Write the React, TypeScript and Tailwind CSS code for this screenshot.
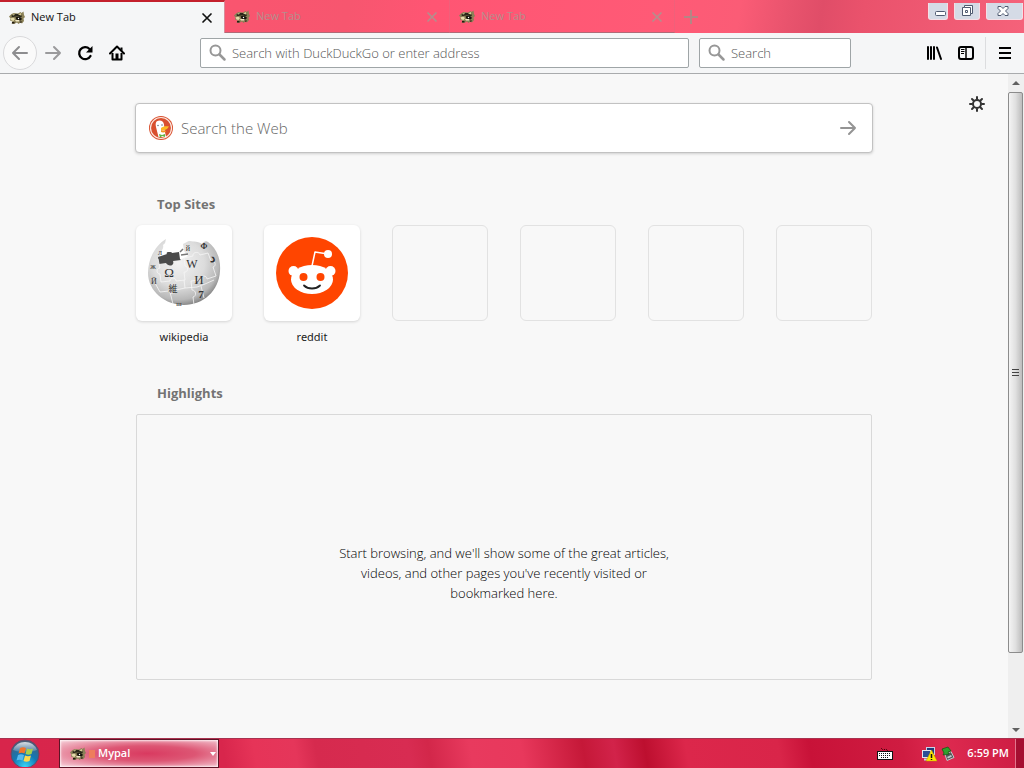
import type { ReactNode } from "react";

const TOP_SITES = [
  { id: "wikipedia", label: "wikipedia", href: "#wikipedia" },
  { id: "reddit", label: "reddit", href: "#reddit" },
];

const EMPTY_TILES = ["t3", "t4", "t5", "t6"];

const TABS = [
  { id: "tab-1", title: "New Tab", active: true },
  { id: "tab-2", title: "New Tab", active: false },
  { id: "tab-3", title: "New Tab", active: false },
];

/* ---------- icons ---------- */

const RaccoonIcon = () => (
  <svg width="16" height="16" viewBox="0 0 16 16" aria-hidden="true" className="shrink-0">
    <path d="M0 6.500 2.500 4 5 3l4 .5L11.500 2l1 1L14.500 1.500 15 5l1 2-1.500 1.500L15 11l-2 2.500-1.500-1L9.500 14 8 12.500 5 14l-2.500-.5 1-2L1 10.500l.5-2z" fill="#8b8157" />
    <path d="M2.500 5.500C5 3.500 10 3.500 13 6l-1 1.500C9 6 6 6 3 7.500z" fill="#2a281a" />
    <path d="M3 5 6 3.500l-1 2zM9 4.500l3-1.500v2.500z" fill="#d9cf98" />
    <path d="M1.500 8.500 4 7.500 6 9 4.500 11l-2-.5z" fill="#e6dcab" />
    <path d="M6.500 7.500c2.500-1 5-.5 6.500 1.500l-1.500 1.500H8z" fill="#16130c" />
    <path d="M6 10h4l1 1.500H7z" fill="#f0e7c4" />
    <path d="M3 12h2.500v1.500H3zM10 11.500h3l-1 1.500z" fill="#231b10" />
    <circle cx="9.500" cy="8.500" r=".7" fill="#fff" />
  </svg>
);

const CloseIcon = () => (
  <svg width="12" height="12" viewBox="0 0 12 12" fill="none" stroke="currentColor" strokeWidth="1.700" strokeLinecap="round" aria-hidden="true">
    <path d="M2 2l8 8M10 2l-8 8" />
  </svg>
);

const ArrowIcon = ({ back = false }: { back?: boolean }) => (
  <svg width="18" height="18" viewBox="0 0 18 18" fill="none" stroke="currentColor" strokeWidth="2" strokeLinecap="round" strokeLinejoin="round" aria-hidden="true" className={back ? "rotate-180" : ""}>
    <path d="M2 9h14M10 3l6 6-6 6" />
  </svg>
);

const SearchIcon = () => (
  <svg width="18" height="18" viewBox="0 0 18 18" fill="none" stroke="#979797" strokeWidth="2" strokeLinecap="round" aria-hidden="true" className="shrink-0">
    <circle cx="6.500" cy="6.500" r="5" />
    <path d="M10.500 10.500l5 5" strokeWidth="2.500" />
  </svg>
);

const ReloadIcon = () => (
  <svg width="16" height="16" viewBox="0 0 16 16" aria-hidden="true">
    <path d="M12.500 4A6 6 0 1 0 13.500 11" fill="none" stroke="#000" strokeWidth="2.300" strokeLinecap="round" />
    <path d="M15.500 1v6.500H9z" fill="#000" />
  </svg>
);

const HomeIcon = () => (
  <svg width="16" height="16" viewBox="0 0 16 16" aria-hidden="true">
    <path d="M1 8.500 8 1.500l7 7" fill="none" stroke="#000" strokeWidth="2" strokeLinecap="round" strokeLinejoin="round" />
    <path d="M3.500 8v6.500h9V8" fill="none" stroke="#000" strokeWidth="2" strokeLinejoin="round" />
    <path d="M6.500 8.500h3V14h-3z" fill="#000" />
    <path d="M11.500 2.500h2V6l-2-2z" fill="#000" />
  </svg>
);

const LibraryIcon = () => (
  <svg width="16" height="16" viewBox="0 0 16 16" stroke="#000" strokeWidth="2" strokeLinecap="round" aria-hidden="true">
    <path d="M2 2v12M5 2v12M8 2v12M11 2.500l4 11.500" />
  </svg>
);

const SidebarIcon = () => (
  <svg width="16" height="16" viewBox="0 0 16 16" fill="none" stroke="#000" aria-hidden="true">
    <rect x="1" y="2" width="14" height="12" rx="2" strokeWidth="2" />
    <path d="M8 2v12" strokeWidth="1.500" />
    <path d="M3 4.500h3.500M3 6.500h3.500M3 8.500h3" />
  </svg>
);

const GearIcon = () => (
  <svg width="16" height="16" viewBox="0 0 16 16" fill="none" stroke="#333" strokeLinecap="round" aria-hidden="true">
    <circle cx="8" cy="8" r="4" strokeWidth="2" />
    <path d="M8 1v2M8 13v2M1 8h2M13 8h2M3 3l1.500 1.500M11.500 11.500 13 13M3 13l1.500-1.500M11.500 4.500 13 3" strokeWidth="2" />
  </svg>
);

const DuckIcon = () => (
  <svg width="24" height="24" viewBox="0 0 24 24" aria-hidden="true" className="shrink-0">
    <circle cx="12" cy="12" r="12" fill="#d9502f" />
    <circle cx="12" cy="12" r="10.500" fill="none" stroke="#fbe9e2" strokeWidth="1.200" />
    <path d="M7.500 5.500c3-2 7-1 7.500 3l.5 5L17 21H9.500L7 11C6.500 8.500 6.500 7 7.500 5.500z" fill="#fff" />
    <path d="M12 12c2-2 5-2 8-1.500l-2 2.500c-2 1-4 2-6 1z" fill="#fdb924" />
    <path d="M12 14c2 1 4 0 5 1s-3 2-5 1z" fill="#f29220" />
    <circle cx="9" cy="9.500" r=".8" fill="#6b7b88" />
    <circle cx="13" cy="9" r=".8" fill="#6b7b88" />
    <path d="M10 18l3 1 3-1v3l-3-1-2 2z" fill="#62b445" />
  </svg>
);

const WikipediaLogo = () => (
  <svg width="76" height="76" viewBox="0 0 76 76" aria-hidden="true">
    <defs>
      <radialGradient id="globe" cx="42%" cy="36%" r="66%">
        <stop offset="0" stopColor="#f2f2f2" />
        <stop offset=".55" stopColor="#dcdcdc" />
        <stop offset=".85" stopColor="#b8b8b8" />
        <stop offset="1" stopColor="#838383" />
      </radialGradient>
    </defs>
    <path d="M20 4c-1 3 0 4-3 6 1 3-1 5-3 9l0 6h20l8-4-4-5-1-7c3-1 4-3 7-3 4 1 8 0 12 3 1-2 4-4 6-2 8 6 13 16 12 29-1 20-17 34-36 34S2 56 2 38C2 23 10 10 20 4z" fill="url(#globe)" />
    <path d="M12 22l9-3c-1-1 0-2 2-2s3 0 3 1l7-1 1 7 1 1-8 1c2 5-5 6-7 2l-7 1z" fill="#4b4b4b" />
    <path d="M34 17l3-3M35 20l7-1" fill="none" stroke="#777" strokeWidth="1.500" />
    <path d="M12 24l2 9c-4 0-4 6 0 6l1 8 9-1c0-4 6-4 6 0l9-1-1-8c4 1 5-6 1-6l-1-8 9-2c-1-4 6-5 7-1l8-2 3 8c4-1 6 5 2 6l3 9-9 3c0-4-7-4-6 1l-10 1 1 9c4 0 5 6 1 7l1 8M38 45l1 8-9 2c0 4-6 5-7 1l-9 1-5-9M24 57l3 12M39 53l12-1 8-3 9-4M55 51l3 12" fill="none" stroke="#f6f6f6" strokeWidth=".8" />
    <g fill="#333" fontFamily="Liberation Serif, serif" textAnchor="middle">
      <text x="23" y="42" fontSize="13">Ω</text>
      <text x="46" y="33" fontSize="12">W</text>
      <text x="53" y="49" fontSize="13">И</text>
      <text x="55" y="63" fontSize="11" fontWeight="bold">7</text>
      <text x="27" y="57" fontSize="9" fontFamily="Noto Sans CJK JP, sans-serif">維</text>
      <text x="66" y="27" fontSize="12" fontWeight="bold">د</text>
      <text x="42" y="16" fontSize="8">й</text>
      <text x="58" y="14" fontSize="8" fontWeight="bold">Ф</text>
      <text x="7" y="34" fontSize="8">ж</text>
      <text x="8" y="49" fontSize="8">Й</text>
      <text x="33" y="71" fontSize="7">ш</text>
      <text x="14" y="20" fontSize="8">л</text>
    </g>
  </svg>
);

const RedditLogo = () => (
  <svg width="72" height="72" viewBox="0 0 72 72" aria-hidden="true">
    <circle cx="36" cy="36" r="36" fill="#ff4500" />
    <path d="M36 29l3-14 13 2" fill="none" stroke="#fff" strokeWidth="1.500" strokeLinejoin="round" />
    <circle cx="52" cy="17" r="4" fill="#fff" />
    <circle cx="17.500" cy="34" r="5" fill="#fff" />
    <circle cx="54.500" cy="34" r="5" fill="#fff" />
    <ellipse cx="36" cy="42.500" rx="21" ry="14.500" fill="#fff" />
    <circle cx="27.500" cy="40" r="4" fill="#ff4500" />
    <circle cx="44.500" cy="40" r="4" fill="#ff4500" />
    <path d="M28 48.500c4 4 12 4 16 0" fill="none" stroke="#222" strokeWidth="1.800" strokeLinecap="round" />
  </svg>
);

const StartOrb = () => (
  <svg width="30" height="28" viewBox="0 0 30 28" aria-hidden="true">
    <defs>
      <radialGradient id="orb" cx="50%" cy="95%" r="90%">
        <stop offset="0" stopColor="#36d6f5" />
        <stop offset=".5" stopColor="#1378b4" />
        <stop offset="1" stopColor="#4a5d78" />
      </radialGradient>
      <linearGradient id="gloss" x1="0" y1="0" x2="0" y2="1">
        <stop offset="0" stopColor="#fff" stopOpacity=".8" />
        <stop offset="1" stopColor="#fff" stopOpacity=".1" />
      </linearGradient>
    </defs>
    <circle cx="15" cy="15" r="14" fill="url(#orb)" stroke="#6c4763" />
    <path d="M3 11a13 13 0 0 1 24 0c-8 3-16 3-24 0z" fill="url(#gloss)" />
    <path d="M10 9c2-1 4-1 6 0l-1.500 5.500c-2-1-4-1-6 0z" fill="#f0742c" />
    <path d="M17 9.500c2 1 4 1 6 0l-1.500 5.500c-2 1-4 1-6 0z" fill="#a9d04b" />
    <path d="M8 16c2-1 4-1 6 0l-1.500 5.500c-2-1-4-1-6 0z" fill="#59b9ee" />
    <path d="M15 16.500c2 1 4 1 6 0l-1.500 5.500c-2 1-4 1-6 0z" fill="#fdd84c" />
  </svg>
);

const KeyboardIcon = () => (
  <svg width="16" height="14" viewBox="0 0 16 14" aria-hidden="true">
    <path d="M4 1l2 2 3-1 2 2" fill="none" stroke="#300" strokeDasharray="1 1" />
    <rect x=".5" y="4.500" width="15" height="8" fill="#fff" stroke="#111" />
    <path d="M2 6.500h12M2 8.500h12M4 10.500h8" stroke="#111" strokeDasharray="1 1" />
  </svg>
);

const NetworkIcon = () => (
  <svg width="16" height="16" viewBox="0 0 16 16" aria-hidden="true">
    <rect x="5.500" y="1.500" width="8" height="7" fill="#203a78" stroke="#c9d2e4" />
    <rect x="1.500" y="4.500" width="8" height="7" fill="#2d4f96" stroke="#e1e6f0" />
    <path d="M3 13.500h5" stroke="#c9d2e4" strokeWidth="2" />
    <path d="M10.500 4 16 15H5z" fill="#ffe600" stroke="#b99b00" strokeWidth=".5" />
    <path d="M10.500 8v4M10.500 13v1" stroke="#111" strokeWidth="1.500" />
  </svg>
);

const DeviceIcon = () => (
  <svg width="14" height="16" viewBox="0 0 14 16" aria-hidden="true">
    <path d="M4 8.500l6-3 3 6-7 3z" fill="#53585a" stroke="#c3c8c8" />
    <path d="M6 11l4-2 1 1.500-4 2z" fill="#c3cccc" />
    <path d="M1 3l6-2 3 4-3 1 1 2-6 1 1-2z" fill="#2fa22d" stroke="#12560f" strokeWidth=".7" />
  </svg>
);

/* ---------- window chrome ---------- */

const CaptionButton = ({ label, className, children }: { label: string; className: string; children: ReactNode }) => (
  <button
    type="button"
    aria-label={label}
    className={`flex h-[17px] items-center justify-center rounded-b-[3px] border border-t-0 border-[#f5dfe6] bg-[#d5dbe6] ${className}`}
  >
    <svg width="16" height="14" viewBox="0 0 16 14" fill="#fff" stroke="#4f5a70" strokeWidth="1" aria-hidden="true" className="shrink-0">
      {children}
    </svg>
  </button>
);

const TabStrip = () => (
  <header className="flex h-[33px] bg-[linear-gradient(100deg,#fa5570_0%,#f9556f_24%,#f7566f_34%,#ff5573_42%,#ff5a76_64%,#fb5c76_72%,#e8536d_77%,#e04d68_80%,#ea526c_84%,#f5627a_100%)]">
    <div role="tablist" aria-label="Tabs" className="flex min-w-0 flex-1">
      {TABS.map(({ id, title, active }) => (
        <div
          key={id}
          className={
            active
              ? "flex w-[225px] items-center border-t-2 border-r border-t-[#c4202c] border-r-[#d88c9a] bg-[#f5f6f7] pr-[10px] pl-[9px] text-[#111]"
              : "flex w-[225px] items-center border-r border-b border-r-[#f0607a] border-b-[#b06a77] pt-px pr-[10px] pl-[9px] text-[#b58e8d]"
          }
        >
          <button type="button" role="tab" aria-selected={active} className="flex flex-1 items-center gap-[6px] text-left text-[11px]">
            <RaccoonIcon />
            {title}
          </button>
          <button type="button" aria-label="Close tab" className="p-px">
            <CloseIcon />
          </button>
        </div>
      ))}
      <button type="button" aria-label="Open a new tab" className="flex w-8 items-center justify-center text-[#b58585]">
        <svg width="14" height="14" viewBox="0 0 14 14" stroke="currentColor" strokeWidth="2" aria-hidden="true">
          <path d="M7 0v14M0 7h14" />
        </svg>
      </button>
    </div>
    <div className="flex items-start gap-[6px] pt-[3px] pr-px">
      <CaptionButton label="Minimize" className="w-5">
        <rect x="5.500" y="7.500" width="10" height="4" rx="1" />
      </CaptionButton>
      <CaptionButton label="Restore" className="w-[26px]">
        <path d="M5.500 1.500h8v8h-2v2h-8v-8h2z" />
        <path d="M5.500 3.500h6v6M6.500 6.500h2v2h-2z" fill="none" />
      </CaptionButton>
      <CaptionButton label="Close" className="w-[37px] pr-1">
        <path d="M3 2.500h3l2 2 2-2h3v2L10.500 7l2.500 2.500v2h-3l-2-2-2 2H3v-2L5.500 7 3 4.500z" />
      </CaptionButton>
    </div>
  </header>
);

const Toolbar = () => (
  <nav aria-label="Navigation" className="flex h-[41px] items-center border-b border-[#a9abad] bg-[#f5f6f7] pl-[3px]">
    <button type="button" aria-label="Back" className="flex size-[34px] items-center justify-center rounded-full border border-[#d9d9db] bg-[#fafafa] text-[#8d8d8f]">
      <ArrowIcon back />
    </button>
    <button type="button" aria-label="Forward" className="flex w-8 justify-center text-[#9a9a9c]">
      <ArrowIcon />
    </button>
    <button type="button" aria-label="Reload" className="flex w-8 justify-center">
      <ReloadIcon />
    </button>
    <button type="button" aria-label="Home" className="flex w-8 justify-center">
      <HomeIcon />
    </button>
    <label className="mr-[10px] ml-[67px] flex h-[30px] flex-1 items-center gap-[5px] rounded-xs border border-[#9fa5a7] bg-white px-2">
      <SearchIcon />
      <input
        type="text"
        aria-label="Search or enter address"
        placeholder="Search with DuckDuckGo or enter address"
        className="min-w-0 flex-1 pt-[2px] text-[13px] font-light outline-none placeholder:text-[#555555]"
      />
    </label>
    <label className="flex h-[30px] w-[152px] items-center gap-[5px] rounded-xs border border-[#9fa5a7] bg-white px-2">
      <SearchIcon />
      <input
        type="text"
        aria-label="Search"
        placeholder="Search"
        className="min-w-0 flex-1 pt-[2px] text-[13px] font-light outline-none placeholder:text-[#555555]"
      />
    </label>
    <button type="button" aria-label="Library" className="ml-[67px] flex w-8 justify-center">
      <LibraryIcon />
    </button>
    <button type="button" aria-label="Sidebars" className="flex w-8 justify-center">
      <SidebarIcon />
    </button>
    <div className="ml-[3px] flex h-8 w-[39px] items-center justify-center border-l border-[#dcdddf]">
      <button type="button" aria-label="Open menu">
        <svg width="14" height="14" viewBox="0 0 14 14" stroke="#000" strokeWidth="2" aria-hidden="true">
          <path d="M1 2h12M1 7h12M1 12h12" />
        </svg>
      </button>
    </div>
  </nav>
);

/* ---------- new tab page ---------- */

const TopSites = () => (
  <section aria-labelledby="top-sites" className="mt-[41px]">
    <h2 id="top-sites" className="pl-[22px] text-[13px] leading-5 font-bold text-[#737373]">
      Top Sites
    </h2>
    <ul className="mt-[11px] flex justify-between px-px">
      {TOP_SITES.map((site) => (
        <li key={site.id}>
          <a href={site.href} className="flex flex-col items-center font-['Noto_Sans',sans-serif] text-[11px] leading-4 text-[#1c1c1c]">
            <span className="flex size-24 items-center justify-center rounded-md bg-white shadow-[0_1px_3px_#00000026]">
              {site.id === "wikipedia" ? <WikipediaLogo /> : <RedditLogo />}
            </span>
            <span className="mt-2">{site.label}</span>
          </a>
        </li>
      ))}
      {EMPTY_TILES.map((id) => (
        <li key={id} className="size-24 rounded-md border border-[#e2e2e2]" />
      ))}
    </ul>
  </section>
);

const Highlights = () => (
  <section aria-labelledby="highlights" className="mt-[38px]">
    <h2 id="highlights" className="pl-[22px] text-[13px] leading-5 font-bold text-[#737373]">
      Highlights
    </h2>
    <div className="mx-px mt-[11px] flex h-[266px] items-center justify-center rounded-xs border border-[#d9d9d9] pt-[52px]">
      <p className="w-[350px] text-center text-[13px] leading-5 font-light text-black">
        Start browsing, and we'll show some of the great articles, videos, and other pages you've recently visited or bookmarked here.
      </p>
    </div>
  </section>
);

const Scrollbar = () => (
  <div aria-hidden="true" className="flex w-4 flex-col items-center bg-[#efefef] pr-px">
    <div className="flex h-[18px] items-center">
      <svg width="8" height="4" viewBox="0 0 8 4" fill="#606060">
        <path d="M0 4l4-4 4 4z" />
      </svg>
    </div>
    <div className="flex w-[15px] flex-[562] items-center justify-center rounded-xs border border-[#8c8c8c] bg-linear-to-r from-[#f4f4f4] via-[#e0e0e0] to-[#bdbdbd]">
      <svg width="7" height="8" viewBox="0 0 7 8" stroke="#444">
        <path d="M0 .5h7M0 3.500h7M0 6.500h7" />
      </svg>
    </div>
    <div className="flex-[68]" />
    <div className="flex h-[17px] items-center">
      <svg width="8" height="4" viewBox="0 0 8 4" fill="#606060">
        <path d="M0 0h8L4 4z" />
      </svg>
    </div>
  </div>
);

const NewTabPage = () => (
  <div className="flex min-h-0 flex-1 bg-[#f8f8f8]">
    <main className="relative flex-1 pt-[29px]">
      <button type="button" aria-label="Customize your New Tab page" className="absolute top-[22px] right-[23px]">
        <GearIcon />
      </button>
      <div className="mx-auto w-[738px]">
        <form role="search" className="flex h-[50px] items-center gap-2 rounded-[4px] border border-[#c2c2c2] bg-white pr-[15px] pl-[13px] shadow-[0_1px_3px_#0000002a]">
          <DuckIcon />
          <input
            type="search"
            aria-label="Search the Web"
            placeholder="Search the Web"
            className="min-w-0 flex-1 text-[15px] font-light outline-none placeholder:text-[#666666]"
          />
          <button type="submit" aria-label="Submit search" className="text-[#949494]">
            <ArrowIcon />
          </button>
        </form>
        <TopSites />
        <Highlights />
      </div>
    </main>
    <Scrollbar />
  </div>
);

/* ---------- taskbar ---------- */

const Taskbar = () => (
  <footer className="flex h-[30px] items-stretch border-t border-[#a8324f] bg-[linear-gradient(80deg,#d8254b_0%,#d8264c_22%,#e63458_25%,#e5365a_29%,#d62a4e_31%,#d82c52_40%,#d3274a_42%,#e83a5e_46%,#e8385c_51%,#c51838_57%,#d2234a_60%,#bd0f2f_63%,#dc274b_67%,#d92549_76%,#c81238_79%,#cf1c41_88%,#de2a50_92%,#cc1c42_100%)]">
    <button type="button" aria-label="Start" className="flex w-[50px] justify-center">
      <StartOrb />
    </button>
    <button
      type="button"
      className="ml-[9px] flex w-[160px] items-center gap-[3px] border border-[#5d1426] bg-[radial-gradient(ellipse_at_55%_50%,#d93a60_0%,#dd5674_40%,#f0b4c2_85%,#f8d3dc_100%)] pr-[2px] pl-[10px] text-[11px] font-semibold text-white shadow-[inset_0_0_2px_1px_#ffffffc0]"
    >
      <RaccoonIcon />
      <span className="h-2 w-[6px] bg-[#ee7d5c]" />
      <span className="flex-1 text-left">Mypal</span>
      <svg width="6" height="4" viewBox="0 0 6 4" fill="#fff" aria-hidden="true">
        <path d="M0 0h6L3 4z" />
      </svg>
    </button>
    <div className="ml-auto flex items-center text-[11px] font-semibold text-white">
      <button type="button" aria-label="Keyboard">
        <KeyboardIcon />
      </button>
      <button type="button" aria-label="Network" className="ml-7">
        <NetworkIcon />
      </button>
      <button type="button" aria-label="Safely remove hardware" className="ml-1">
        <DeviceIcon />
      </button>
      <time dateTime="18:59" className="ml-3">
        6:59 PM
      </time>
      <button type="button" aria-label="Show desktop" className="ml-[6px] h-full w-[9px] border-l border-[#e2768d] bg-[#a50f31]" />
    </div>
  </footer>
);

export default function App() {
  return (
    <div className="flex h-screen flex-col overflow-hidden font-['Open_Sans','Noto_Sans',sans-serif]">
      <TabStrip />
      <Toolbar />
      <NewTabPage />
      <Taskbar />
    </div>
  );
}
